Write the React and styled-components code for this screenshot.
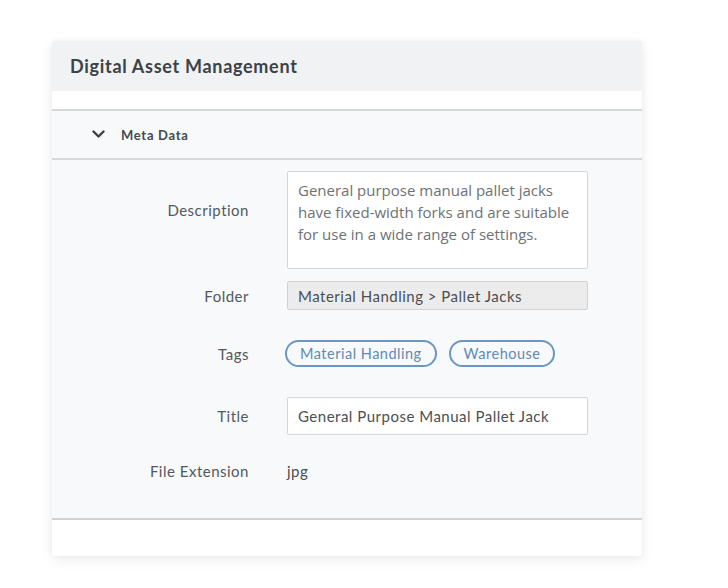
import React from "react";
import styled, { createGlobalStyle } from "styled-components";

const Global = createGlobalStyle`
  html, body { margin: 0; padding: 0; background: #ffffff; }
  body { font-family: "Lato", "Liberation Sans", sans-serif; }
`;

const Page = styled.div`
  padding: 41px 0 0 52px;
  height: 588px;
  box-sizing: border-box;
`;

const Card = styled.div`
  width: 590px;
  background: #ffffff;
  border-radius: 3px;
  box-shadow: 0 4px 14px rgba(0, 0, 0, 0.07), 0 0 6px rgba(0, 0, 0, 0.04);
  overflow: hidden;
`;

const Header = styled.div`
  height: 50px;
  background: #f1f2f3;
  display: flex;
  align-items: center;
  padding-left: 18px;
  font-size: 18px;
  letter-spacing: 0.7px;
  font-weight: 700;
  color: #3c4247;
`;

const Spacer = styled.div`
  height: 18px;
  background: #ffffff;
  border-bottom: 2px solid #d6d9db;
`;

const SectionHead = styled.div`
  height: 47px;
  background: #f8f9fa;
  display: flex;
  align-items: center;
  gap: 16px;
  padding-left: 40px;
  border-bottom: 2px solid #d6d9db;
  font-size: 13px;
  letter-spacing: 0.7px;
  font-weight: 700;
  color: #444a4f;
`;

const Body = styled.div`
  background: #f8f9fa;
  padding: 11px 0 38px;
  border-bottom: 2px solid #cfd3d5;
`;

const Row = styled.div`
  display: grid;
  grid-template-columns: 197px 301px;
  column-gap: 38px;
  align-items: center;
  margin-top: ${(p) => p.$mt || 0}px;
`;

const Label = styled.div`
  text-align: right;
  font-size: 15px;
  letter-spacing: 0.5px;
  color: #53585c;
  align-self: ${(p) => (p.$top ? "start" : "center")};
  padding-top: ${(p) => p.$top || 0}px;
`;

const TextArea = styled.div`
  box-sizing: border-box;
  height: 98px;
  background: #ffffff;
  border: 1px solid #d3d6d8;
  border-radius: 2px;
  padding: 7px 10px;
  font-family: "Open Sans", "Liberation Sans", sans-serif;
  font-size: 15px;
  line-height: 22px;
  color: #6e7275;
`;

const Field = styled.div`
  box-sizing: border-box;
  height: ${(p) => p.$h}px;
  background: ${(p) => (p.$disabled ? "#ececec" : "#ffffff")};
  border: 1px solid ${(p) => (p.$disabled ? "#cfd1d2" : "#d3d6d8")};
  border-radius: 2px;
  padding: 0 10px;
  display: flex;
  align-items: center;
  font-size: 15px;
  letter-spacing: 0.5px;
  color: #4a4f53;
`;

const Tags = styled.div`
  display: flex;
  gap: 12px;
  margin-left: -2px;
`;

const Tag = styled.span`
  box-sizing: border-box;
  height: 27px;
  padding: 0 13px;
  border: 2px solid #6a97c2;
  border-radius: 14px;
  display: inline-flex;
  align-items: center;
  font-size: 14.5px;
  letter-spacing: 0.5px;
  color: #5f8ab3;
`;

const Value = styled.div`
  font-size: 15px;
  letter-spacing: 0.5px;
  color: #4a4f53;
`;

const Footer = styled.div`
  height: 36px;
  background: #ffffff;
`;

const Chevron = () => (
  <svg width="13" height="9" viewBox="0 0 13 9" fill="none">
    <path d="M1.5 1.5 L6.5 6.5 L11.5 1.5" stroke="#3a3f44" strokeWidth="2.4" strokeLinecap="round" strokeLinejoin="round" />
  </svg>
);

export default function App() {
  return (
    <>
      <Global />
      <Page>
        <Card>
          <Header>Digital Asset Management</Header>
          <Spacer />
          <SectionHead>
            <Chevron />
            Meta Data
          </SectionHead>
          <Body>
            <Row>
              <Label $top={30}>Description</Label>
              <TextArea>
                General purpose manual pallet jacks have fixed-width forks and are suitable for use in a wide range of settings.
              </TextArea>
            </Row>
            <Row $mt={12}>
              <Label>Folder</Label>
              <Field $h={29} $disabled>Material Handling &gt; Pallet Jacks</Field>
            </Row>
            <Row $mt={30}>
              <Label>Tags</Label>
              <Tags>
                <Tag>Material Handling</Tag>
                <Tag>Warehouse</Tag>
              </Tags>
            </Row>
            <Row $mt={30}>
              <Label>Title</Label>
              <Field $h={38}>General Purpose Manual Pallet Jack</Field>
            </Row>
            <Row $mt={27}>
              <Label>File Extension</Label>
              <Value>jpg</Value>
            </Row>
          </Body>
          <Footer />
        </Card>
      </Page>
    </>
  );
}
